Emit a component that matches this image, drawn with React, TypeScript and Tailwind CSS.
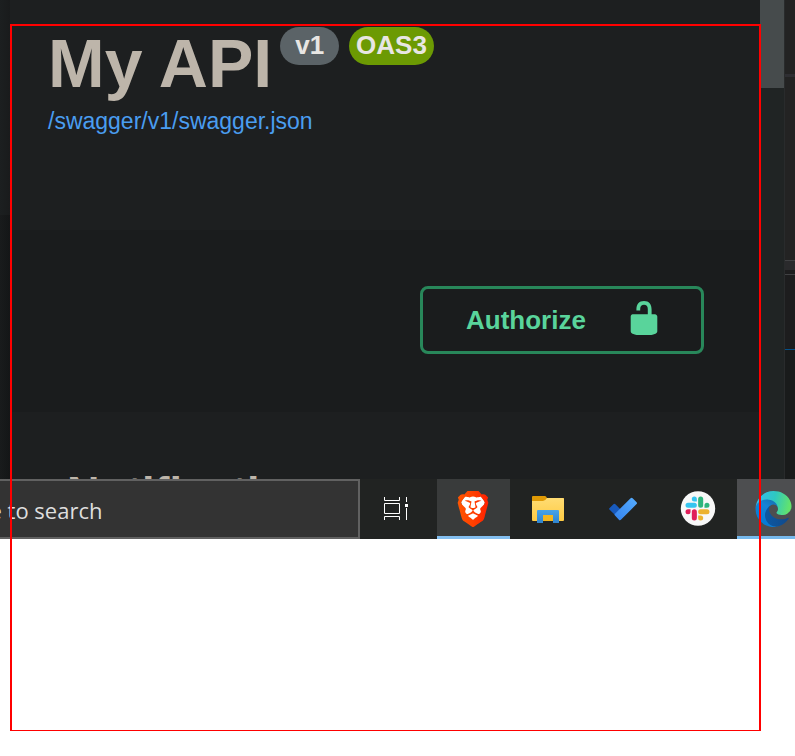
import type { ReactNode } from "react";
import { SiBrave } from "react-icons/si";

function UnlockedIcon() {
  return (
    <svg viewBox="0 0 20 20" className="mb-1 h-[38px] w-[38px]" fill="currentColor" aria-hidden="true">
      <path d="M15.8 8H14V5.6C14 2.703 12.665 1 10 1 7.334 1 6 2.703 6 5.6V6h2v-.801C8 3.754 8.797 3 10 3c1.203 0 2 .754 2 2.199V8H4c-.553 0-1 .646-1 1.199V17c0 .549.428 1.139.951 1.307l1.197.387C5.672 18.861 6.55 19 7.1 19h5.8c.549 0 1.428-.139 1.951-.307l1.196-.387c.524-.167.953-.757.953-1.306V9.199C17 8.646 16.352 8 15.8 8z" />
    </svg>
  );
}

function TaskViewIcon() {
  return (
    <svg viewBox="0 0 37 36" className="h-9 w-[37px]" fill="none" stroke="#fff" aria-hidden="true">
      <path d="M4.500 6v3.500h15V6M4.500 29v-3.500h15V29M4.500 12.500h15v10h-15zM26.500 6v5M26.500 17v12" />
      <path d="M25 13h3v3h-3z" fill="#fff" stroke="none" />
    </svg>
  );
}

function BraveIcon() {
  return (
    <svg viewBox="0 0 37 36" className="h-9 w-[37px]" aria-hidden="true">
      <defs>
        <linearGradient id="brave" x1="0" x2="1">
          <stop offset="0" stopColor="#ff5601" />
          <stop offset=".5" stopColor="#ff4000" />
          <stop offset="1" stopColor="#ff1f01" />
        </linearGradient>
      </defs>
      <path d="M10 5h16l4 6-5 14-7 6-7-6-5-14z" fill="#fff" />
      <SiBrave size={36} fill="url(#brave)" />
    </svg>
  );
}

function FolderIcon() {
  return (
    <svg viewBox="0 0 37 36" className="h-9 w-[37px]" aria-hidden="true">
      <defs>
        <linearGradient id="folder" x1="0" y1="0" x2="0" y2="1">
          <stop offset="0" stopColor="#ffdc73" />
          <stop offset="1" stopColor="#ffcb43" />
        </linearGradient>
        <linearGradient id="tray" x1="0" y1="0" x2="0" y2="1">
          <stop offset="0" stopColor="#48a4e8" />
          <stop offset="1" stopColor="#2f83cf" />
        </linearGradient>
      </defs>
      <path d="M2 6q0-1 1-1h12q1 0 2 2h16q1 0 1 1v3H2z" fill="#e09a05" />
      <path d="M2 10h11q2 0 4-3h16q1 0 1 1v21q0 1-1 1H3q-1 0-1-1z" fill="url(#folder)" />
      <path d="M13 24h10v6H13z" fill="#f3b61f" />
      <path d="M7 32V20q0-1 1-1h20q1 0 1 1v12h-6v-8H13v8z" fill="url(#tray)" />
    </svg>
  );
}

function TodoIcon() {
  return (
    <svg viewBox="0 0 37 36" className="h-9 w-[37px]" aria-hidden="true">
      <defs>
        <linearGradient id="todo" x1="0" y1="1" x2="1" y2="0">
          <stop offset="0" stopColor="#3382ee" />
          <stop offset="1" stopColor="#56adff" />
        </linearGradient>
      </defs>
      <path d="m4.400 17.300 4-4q1-1 2 0l9 9-5.500 5.500-9.500-9.300q-.6-.6 0-1.200z" fill="#185abd" />
      <path d="M12.300 27 9.800 24.200q-.6-.6 0-1.300L25.600 7.300q1-.9 2 0l4 4q.8.900 0 1.800L15.900 28.800q-1 .9-2-.1z" fill="url(#todo)" />
    </svg>
  );
}

function SlackIcon() {
  return (
    <svg viewBox="0 0 37 36" className="h-9 w-[37px]" aria-hidden="true">
      <circle cx="18" cy="17.500" r="17.200" fill="#f8f8f8" />
      <g transform="translate(5.500 5.500)">
        <path fill="#e01e5a" d="M5.042 15.165a2.528 2.528 0 0 1-2.520 2.523A2.528 2.528 0 0 1 0 15.165a2.527 2.527 0 0 1 2.522-2.520h2.520v2.520zM6.313 15.165a2.527 2.527 0 0 1 2.521-2.520 2.527 2.527 0 0 1 2.521 2.520v6.313A2.528 2.528 0 0 1 8.834 24a2.528 2.528 0 0 1-2.521-2.522v-6.313z" />
        <path fill="#36c5f0" d="M8.834 5.042a2.528 2.528 0 0 1-2.521-2.520A2.528 2.528 0 0 1 8.834 0a2.528 2.528 0 0 1 2.521 2.522v2.520H8.834zM8.834 6.313a2.528 2.528 0 0 1 2.521 2.521 2.528 2.528 0 0 1-2.521 2.521H2.522A2.528 2.528 0 0 1 0 8.834a2.528 2.528 0 0 1 2.522-2.521h6.312z" />
        <path fill="#2eb67d" d="M18.956 8.834a2.528 2.528 0 0 1 2.522-2.521A2.528 2.528 0 0 1 24 8.834a2.528 2.528 0 0 1-2.522 2.521h-2.522V8.834zM17.688 8.834a2.528 2.528 0 0 1-2.523 2.521 2.527 2.527 0 0 1-2.520-2.521V2.522A2.527 2.527 0 0 1 15.165 0a2.528 2.528 0 0 1 2.523 2.522v6.312z" />
        <path fill="#ecb22e" d="M15.165 18.956a2.528 2.528 0 0 1 2.523 2.522A2.528 2.528 0 0 1 15.165 24a2.527 2.527 0 0 1-2.520-2.522v-2.522h2.520zM15.165 17.688a2.527 2.527 0 0 1-2.520-2.523 2.526 2.526 0 0 1 2.520-2.520h6.313A2.527 2.527 0 0 1 24 15.165a2.528 2.528 0 0 1-2.522 2.523h-6.313z" />
      </g>
    </svg>
  );
}

function EdgeIcon() {
  return (
    <svg viewBox="0 0 256 256" className="h-9 w-[37px]" aria-hidden="true">
      <defs>
        <linearGradient id="edge-deep" x1="63" y1="177" x2="241" y2="177" gradientUnits="userSpaceOnUse">
          <stop offset="0" stopColor="#0c59a4" />
          <stop offset="1" stopColor="#114a8b" />
        </linearGradient>
        <linearGradient id="edge-mid" x1="150" y1="70" x2="46" y2="220" gradientUnits="userSpaceOnUse">
          <stop offset="0" stopColor="#1670b0" />
          <stop offset=".4" stopColor="#1583d6" />
          <stop offset="1" stopColor="#067bd6" />
        </linearGradient>
        <linearGradient id="edge-top" x1="20" y1="60" x2="240" y2="110" gradientUnits="userSpaceOnUse">
          <stop offset="0" stopColor="#33bdea" />
          <stop offset=".5" stopColor="#2fc8c0" />
          <stop offset="1" stopColor="#62e36d" />
        </linearGradient>
      </defs>
      <path
        transform="translate(-4.630 -4.920)"
        fill="url(#edge-deep)"
        d="M235.680 195.460a93.730 93.730 0 0 1-10.540 4.710 101.870 101.870 0 0 1-35.900 6.460c-47.320 0-88.540-32.550-88.540-74.320A31.480 31.480 0 0 1 117.130 105c-42.800 1.800-53.800 46.400-53.800 72.530 0 73.880 68.090 81.370 82.760 81.370 7.910 0 19.840-2.300 27-4.560l1.310-.44a128.340 128.340 0 0 0 66.600-52.800 4 4 0 0 0-5.320-5.640z"
      />
      <path
        fill="url(#edge-mid)"
        d="M105.730 241.420A79.200 79.200 0 0 1 83 220.080a80.720 80.720 0 0 1 29.500-120c3.120-1.470 8.450-4.130 15.540-4a32.350 32.350 0 0 1 25.690 13 31.880 31.880 0 0 1 6.360 18.660c0-.21 24.460-79.600-80-79.600-43.900 0-80 41.660-80 78.210a130.150 130.150 0 0 0 12.110 56 128 128 0 0 0 156.380 67.110 75.550 75.550 0 0 1-62.780-8z"
      />
      <path
        fill="url(#edge-top)"
        d="M152.330 148.860c-.81 1.050-3.300 2.500-3.300 5.660 0 2.610 1.700 5.120 4.720 7.230 14.380 10 41.490 8.680 41.560 8.680a59.560 59.560 0 0 0 30.270-8.350 61.380 61.380 0 0 0 30.430-52.880c.26-22.410-8-37.310-11.340-43.920C223.460 23.840 177.720 0 128 0A128 128 0 0 0 0 126.200c.48-36.540 36.800-66.050 80-66.050 3.500 0 23.460.34 42 10.070 16.340 8.580 24.900 18.940 30.850 29.210 6.180 10.670 7.280 24.150 7.280 29.520s-2.740 13.330-7.800 19.910z"
      />
    </svg>
  );
}

function TaskButton({ label, tone = "", children }: { label: string; tone?: string; children: ReactNode }) {
  return (
    <button
      type="button"
      aria-label={label}
      className={`flex w-[73px] shrink-0 justify-center border-b-[3px] pt-3 ${tone || "border-transparent"}`}
    >
      {children}
    </button>
  );
}

function Taskbar() {
  return (
    <nav className="flex h-[60px] gap-[2px] overflow-hidden bg-[#212322]" aria-label="Taskbar">
      <div className="flex w-[360px] shrink-0 overflow-hidden border-2 border-l-0 border-[#616161] bg-[#333333]">
        <input
          type="text"
          aria-label="Search"
          placeholder="Type here to search"
          className="-ml-[100px] w-[400px] shrink-0 bg-transparent pt-[2px] font-['Open_Sans','Noto_Sans',sans-serif] text-[22px] text-[#dedede] outline-none placeholder:text-[#dedede] placeholder:opacity-100"
        />
      </div>
      <TaskButton label="Task view">
        <TaskViewIcon />
      </TaskButton>
      <TaskButton label="Brave" tone="border-[#84bff0] bg-[#393b3b]">
        <BraveIcon />
      </TaskButton>
      <TaskButton label="File Explorer">
        <FolderIcon />
      </TaskButton>
      <TaskButton label="To Do">
        <TodoIcon />
      </TaskButton>
      <TaskButton label="Slack">
        <SlackIcon />
      </TaskButton>
      <TaskButton label="Edge" tone="border-[#76b9ed] bg-[#4d4e50]">
        <EdgeIcon />
      </TaskButton>
    </nav>
  );
}

function ApiPage() {
  return (
    <main className="flex min-w-0 flex-1 flex-col bg-[#1d1f20]">
      <header className="h-[230px] pt-[27px] pl-[38px]">
        <div className="flex items-start">
          <h1 className="mr-[8px] text-[68px] leading-[72px] font-bold text-[#bdb5aa]">My API</h1>
          <span className="mr-[10px] h-[38px] rounded-[19px] bg-[#5b6367] px-[15px] text-[26px] leading-[36px] font-bold text-[#e8e6e3]">
            v1
          </span>
          <span className="h-[38px] rounded-[19px] bg-[#6c9a03] px-[7px] text-[26px] leading-[36px] font-bold text-[#e8e6e3]">
            OAS3
          </span>
        </div>
        <a href="#spec" className="block w-fit text-[23px] leading-[44px] text-[#4a9df0]">
          /swagger/v1/swagger.json
        </a>
      </header>
      <section className="flex h-[182px] items-start justify-end bg-[#1a1c1d] pt-14 pr-14">
        <button
          type="button"
          className="flex h-[68px] w-[284px] items-center justify-between rounded-lg border-[3px] border-[#28875a] pr-[38px] pl-[43px] text-[26px] font-bold text-[#59d49b]"
        >
          Authorize
          <UnlockedIcon />
        </button>
      </section>
      <section className="h-[67px] overflow-hidden pt-[55px] pl-[57px]">
        <h2 className="text-[45px] leading-[52px] font-bold text-[#bdb5aa]">Notification</h2>
      </section>
    </main>
  );
}

export default function App() {
  return (
    <div className="relative min-h-screen overflow-hidden bg-white font-['Liberation_Sans',Arial,sans-serif]">
      <div className="flex h-[479px] overflow-hidden">
        <div className="flex w-[10px] shrink-0 flex-col">
          <div className="h-[215px] bg-linear-to-r from-[#1c1f20] to-[#191b1c]" />
          <div className="flex-1 bg-linear-to-r from-[#191b1c] to-[#141617]" />
        </div>
        <ApiPage />
        <div className="w-6 shrink-0 bg-[#202424]">
          <div className="h-[88px] bg-[#464b4c]" />
        </div>
        <div className="flex w-[11px] shrink-0 flex-col border-l border-l-[#292b2c] bg-[#232323]">
          <div className="h-[74px]" />
          <div className="h-[3px] bg-[#2e2e32]" />
          <div className="h-[183px]" />
          <div className="h-[10px] border-t border-[#404143] bg-[#2a2a2c]" />
          <div className="h-[4px] bg-[#1d1d1e]" />
          <div className="h-[75px] border-t border-[#404143] bg-[#1d1d1e]" />
          <div className="flex-1 border-t border-[#055189] bg-[#191b1b]" />
        </div>
      </div>
      <Taskbar />
      <div className="h-[192px]" />
      {/* Selection frame drawn over the page */}
      <div className="pointer-events-none absolute top-6 right-[34px] left-[10px] h-[707px] border-2 border-b border-[#ff0000]" />
    </div>
  );
}
